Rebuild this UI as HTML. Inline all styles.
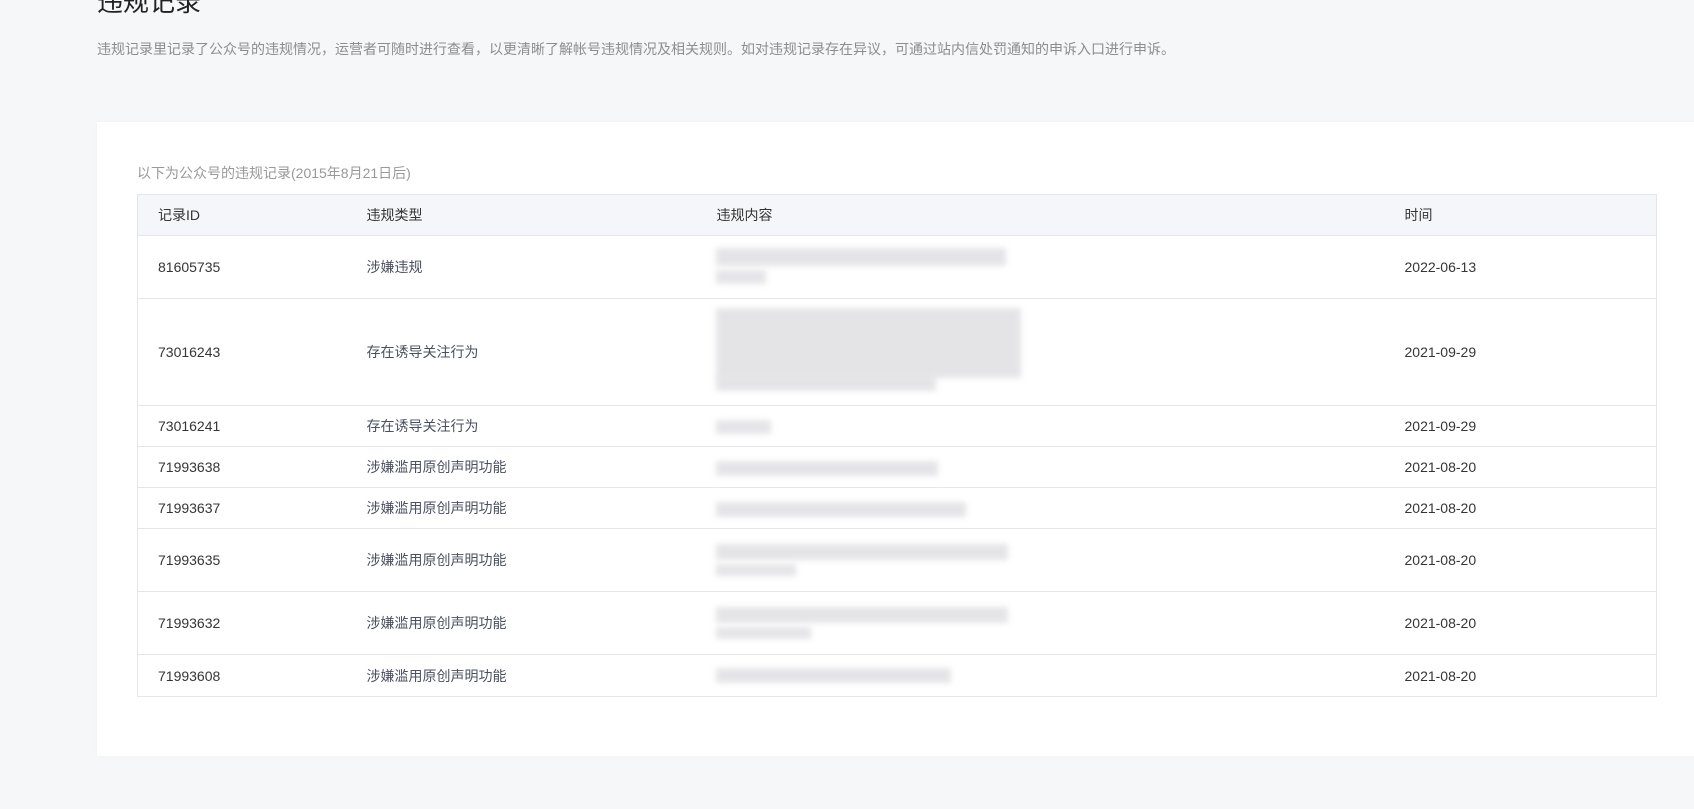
<!DOCTYPE html>
<html><head><meta charset="utf-8"><style>
*{margin:0;padding:0;box-sizing:border-box}
body{width:1694px;height:809px;overflow:hidden;background:#f6f7f9;font-family:"Liberation Sans","Noto Sans CJK SC",sans-serif;position:relative;color:#353535}
.title{position:absolute;left:97px;top:-18px;font-size:26px;color:#222}
.desc{position:absolute;left:97px;top:39px;font-size:14px;color:#8d8d8d}
.card{position:absolute;left:97px;top:122px;width:1610px;height:634px;background:#fff;box-shadow:0 0 3px rgba(0,0,0,.04)}
.cap{position:absolute;left:137px;top:163px;font-size:14px;color:#999}
table{position:absolute;left:137px;top:194px;width:1520px;border-collapse:collapse;font-size:14px}
td,th{border-top:1px solid #e4e6eb;font-weight:normal;text-align:left;vertical-align:middle;padding:0}
table{border:1px solid #e4e6eb}
th{background:#f4f6f9;height:41px;color:#353535}
td:nth-child(2){color:#4a5060}
.c1{padding-left:20px;width:229px}.c2{width:350px}.c3{width:688px}
.blur{position:absolute;background:#dcdce0;filter:blur(3px);opacity:.75}
</style></head><body>
<div class="title">违规记录</div>
<div class="desc">违规记录里记录了公众号的违规情况，运营者可随时进行查看，以更清晰了解帐号违规情况及相关规则。如对违规记录存在异议，可通过站内信处罚通知的申诉入口进行申诉。</div>
<div class="card"></div>
<div class="cap">以下为公众号的违规记录(2015年8月21日后)</div>
<table>
<tr><th class="c1">记录ID</th><th class="c2">违规类型</th><th class="c3">违规内容</th><th>时间</th></tr>
<tr style="height:63px"><td class="c1">81605735</td><td>涉嫌违规</td><td></td><td>2022-06-13</td></tr>
<tr style="height:107px"><td class="c1">73016243</td><td>存在诱导关注行为</td><td></td><td>2021-09-29</td></tr>
<tr style="height:41px"><td class="c1">73016241</td><td>存在诱导关注行为</td><td></td><td>2021-09-29</td></tr>
<tr style="height:41px"><td class="c1">71993638</td><td>涉嫌滥用原创声明功能</td><td></td><td>2021-08-20</td></tr>
<tr style="height:41px"><td class="c1">71993637</td><td>涉嫌滥用原创声明功能</td><td></td><td>2021-08-20</td></tr>
<tr style="height:63px"><td class="c1">71993635</td><td>涉嫌滥用原创声明功能</td><td></td><td>2021-08-20</td></tr>
<tr style="height:63px"><td class="c1">71993632</td><td>涉嫌滥用原创声明功能</td><td></td><td>2021-08-20</td></tr>
<tr style="height:42px"><td class="c1">71993608</td><td>涉嫌滥用原创声明功能</td><td></td><td>2021-08-20</td></tr>
</table>
<div class="blur" style="left:716px;top:248px;width:290px;height:18px"></div>
<div class="blur" style="left:716px;top:270px;width:50px;height:14px"></div>
<div class="blur" style="left:716px;top:308px;width:305px;height:70px"></div>
<div class="blur" style="left:716px;top:376px;width:220px;height:15px"></div>
<div class="blur" style="left:716px;top:420px;width:55px;height:14px"></div>
<div class="blur" style="left:716px;top:461px;width:222px;height:15px"></div>
<div class="blur" style="left:716px;top:502px;width:250px;height:15px"></div>
<div class="blur" style="left:716px;top:544px;width:292px;height:16px"></div>
<div class="blur" style="left:716px;top:564px;width:80px;height:12px"></div>
<div class="blur" style="left:716px;top:607px;width:292px;height:16px"></div>
<div class="blur" style="left:716px;top:627px;width:95px;height:12px"></div>
<div class="blur" style="left:716px;top:668px;width:235px;height:15px"></div>
</body></html>
